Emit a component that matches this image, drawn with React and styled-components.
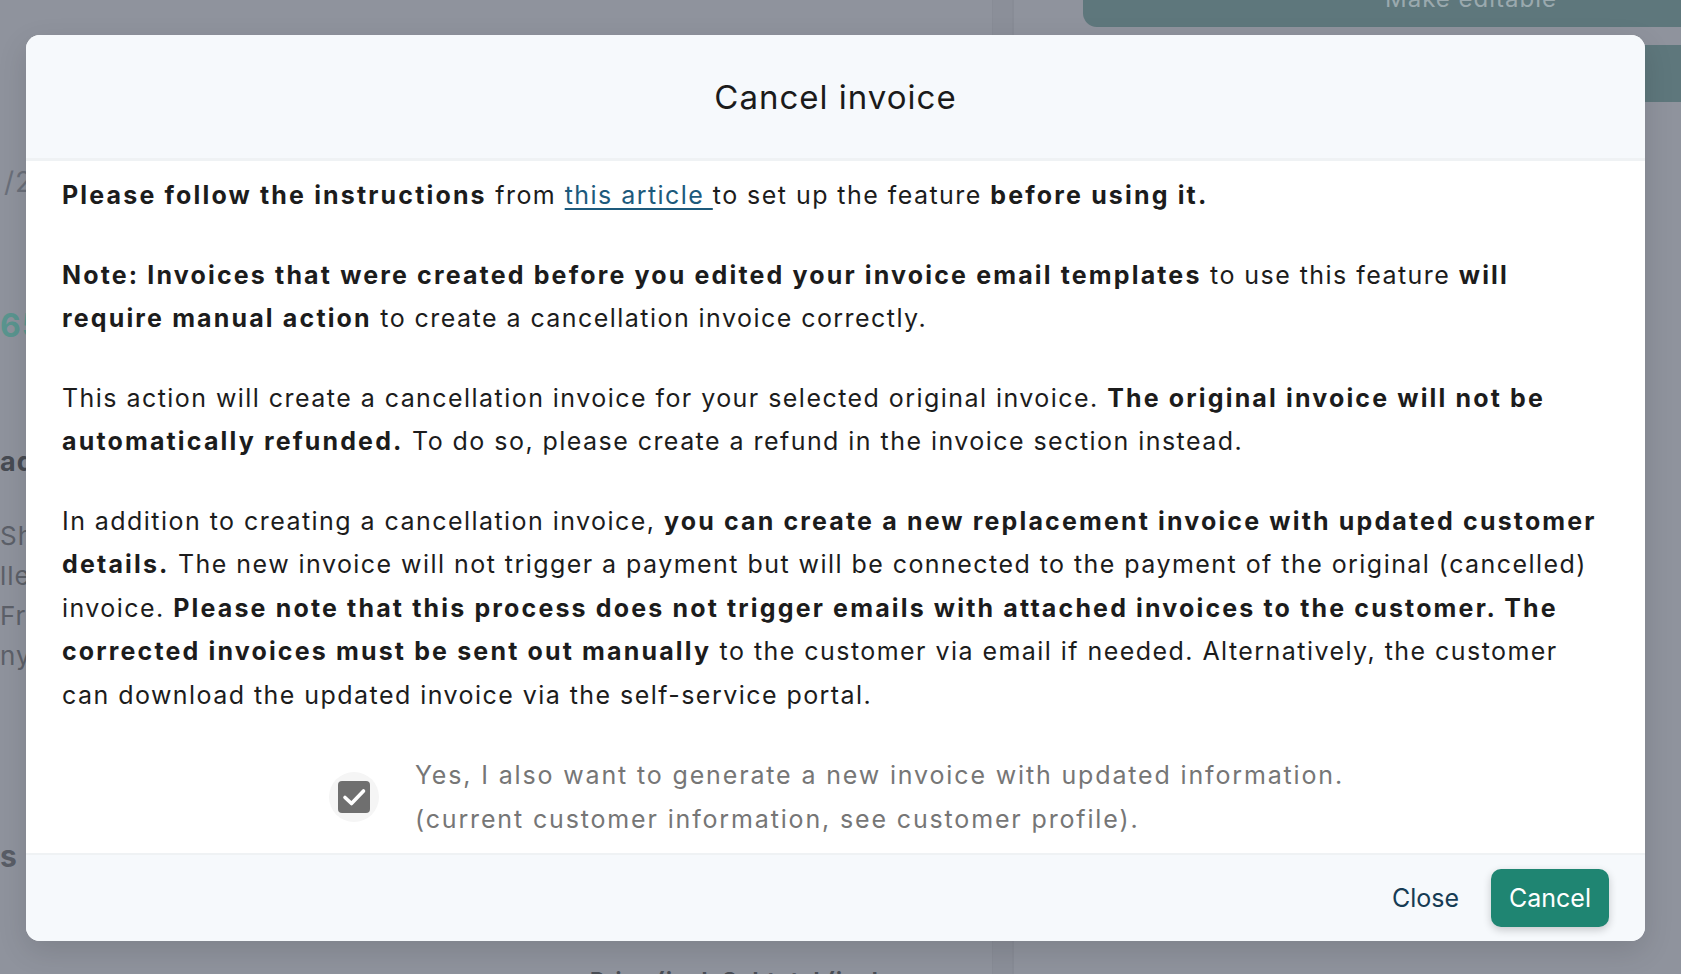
import React from 'react';
import styled, { createGlobalStyle } from 'styled-components';

const Global = createGlobalStyle`
  html, body { margin: 0; padding: 0; }
  body { font-family: Inter, "Noto Sans", sans-serif; -webkit-font-smoothing: antialiased; }
  #root { width: 1681px; height: 974px; }
`;

const Page = styled.div`
  position: relative;
  width: 1681px;
  height: 974px;
  overflow: hidden;
  background: #8f939d;
  display: grid;
  grid-template-columns: 992px 21px 42px 1fr;
`;

const LeftCol = styled.div`
  display: flex;
  flex-direction: column;
  overflow: hidden;
`;

const Frag = styled.div`
  margin-top: ${p => p.$top || 0}px;
  margin-left: ${p => p.$left || 0}px;
  font-size: ${p => p.$size || 26}px;
  line-height: ${p => p.$lh || 40}px;
  font-weight: ${p => p.$weight || 400};
  color: ${p => p.$color || '#5c6069'};
  letter-spacing: 1px;
  white-space: nowrap;
`;

const Rule = styled.div`
  margin-top: ${p => p.$top || 0}px;
  height: 1px;
  background: #9a9ea8;
  width: 100%;
`;

const SepCol = styled.div`
  background: ${p => p.$bg || 'transparent'};
  border-left: 1px solid #888c96;
  border-right: ${p => (p.$right ? '1px solid #888c96' : 'none')};
`;

const RightCol = styled.div`
  display: flex;
  flex-direction: column;
  padding-left: 28px;
`;

const MakeEditable = styled.div`
  margin-top: -30px;
  height: 57px;
  background: #5e777c;
  border-radius: 0 0 0 14px;
  display: flex;
  align-items: center;
  justify-content: center;
  padding-left: 178px;
  color: #9aa9ae;
  font-size: 24px;
  letter-spacing: 1px;
`;

const TealBar = styled.div`
  margin-top: 18px;
  margin-left: -28px;
  height: 57px;
  background: #5e777c;
`;

const Dialog = styled.div`
  position: absolute;
  top: 35px;
  left: 26px;
  width: 1619px;
  height: 906px;
  background: #ffffff;
  border-radius: 14px;
  overflow: hidden;
  display: flex;
  flex-direction: column;
  box-shadow: 0 10px 30px rgba(0, 0, 0, 0.12);
`;

const Header = styled.header`
  flex-shrink: 0;
  height: 123px;
  background: #f6f9fc;
  border-bottom: 3px solid #eff2f4;
  display: flex;
  align-items: center;
  justify-content: center;
`;

const Title = styled.h2`
  margin: 0;
  font-size: 33px;
  font-weight: 400;
  letter-spacing: 1px;
  color: #1b1b1b;
`;

const Body = styled.div`
  flex: 1;
  padding: 13px 34px 0 36px;
  color: #1c1c1c;
`;

const Para = styled.p`
  margin: 0 0 36px;
  font-size: 25px;
  line-height: 43.5px;
  letter-spacing: 1.45px;
  b { font-weight: 700; letter-spacing: 2.15px; }
`;

const Link = styled.a`
  color: #1d5a7c;
  text-decoration: underline;
  text-underline-offset: 4px;
  text-decoration-thickness: 1.5px;
`;

const CheckRow = styled.label`
  display: flex;
  align-items: center;
  justify-content: center;
  gap: 36px;
`;

const Halo = styled.span`
  width: 50px;
  height: 50px;
  border-radius: 50%;
  background: #f5f5f5;
  display: flex;
  align-items: center;
  justify-content: center;
  flex-shrink: 0;
`;

const Box = styled.span`
  width: 32px;
  height: 32px;
  border-radius: 4px;
  background: #6f6f6f;
  display: flex;
  align-items: center;
  justify-content: center;
`;

const CheckLabel = styled.span`
  font-size: 25px;
  line-height: 44px;
  letter-spacing: 1.85px;
  color: #767676;
`;

const Footer = styled.footer`
  flex-shrink: 0;
  height: 86px;
  background: #f6f9fc;
  border-top: 2px solid #eff2f4;
  display: flex;
  align-items: center;
  justify-content: flex-end;
  gap: 16px;
  padding: 0 36px 0 0;
`;

const TextButton = styled.button`
  border: none;
  background: none;
  font-family: inherit;
  font-size: 25px;
  color: #163c54;
  padding: 12px 16px;
  cursor: pointer;
`;

const PrimaryButton = styled.button`
  border: none;
  font-family: inherit;
  font-size: 25px;
  color: #ffffff;
  background: #1f8572;
  height: 58px;
  padding: 0 18px;
  border-radius: 10px;
  box-shadow: 0 3px 8px rgba(0, 0, 0, 0.2);
  cursor: pointer;
`;

export default function App() {
  return (
    <>
      <Global />
      <Page>
        <LeftCol>
          <Frag $top={162} $left={4} $size={28} $color="#6a6f7a">/2</Frag>
          <Frag $top={104} $size={32} $weight={700} $color="#5a958f">65</Frag>
          <Frag $top={96} $size={27} $weight={700} $color="#474b53">ad</Frag>
          <Rule $top={16} />
          <Frag $top={18}>Sh</Frag>
          <Frag>lle</Frag>
          <Frag>Fra</Frag>
          <Frag>ny</Frag>
          <Rule $top={18} />
          <Frag $top={146} $size={30} $lh={33} $weight={700} $color="#595d66">s</Frag>
          <Frag $top={91} $left={590} $size={22} $lh={33} $weight={700} $color="#4a4e56">Price (incl. Subtotal (incl.</Frag>
        </LeftCol>
        <SepCol $bg="#8b8f99" $right />
        <SepCol />
        <RightCol>
          <MakeEditable>Make editable</MakeEditable>
          <TealBar />
        </RightCol>

        <Dialog role="dialog">
          <Header>
            <Title>Cancel invoice</Title>
          </Header>
          <Body>
            <Para>
              <b>Please follow the instructions</b> from <Link href="#">this article </Link>to set up the feature <b>before using it.</b>
            </Para>
            <Para>
              <b>Note: Invoices that were created before you edited your invoice email templates</b> to use this feature <b>will require manual action</b> to create a cancellation invoice correctly.
            </Para>
            <Para>
              This action will create a cancellation invoice for your selected original invoice. <b>The original invoice will not be automatically refunded.</b> To do so, please create a refund in the invoice section instead.
            </Para>
            <Para>
              In addition to creating a cancellation invoice, <b>you can create a new replacement invoice with updated customer details.</b> The new invoice will not trigger a payment but will be connected to the payment of the original (cancelled) invoice. <b>Please note that this process does not trigger emails with attached invoices to the customer. The corrected invoices must be sent out manually</b> to the customer via email if needed. Alternatively, the customer can download the updated invoice via the self-service portal.
            </Para>
            <CheckRow>
              <Halo>
                <Box>
                  <svg width="32" height="32" viewBox="0 0 32 32" fill="none">
                    <path d="M7 16.5l6.5 6L25.5 10" stroke="#fff" strokeWidth="3.6" strokeLinecap="round" strokeLinejoin="round" />
                  </svg>
                </Box>
              </Halo>
              <CheckLabel>
                Yes, I also want to generate a new invoice with updated information.
                <br />
                (current customer information, see customer profile).
              </CheckLabel>
            </CheckRow>
          </Body>
          <Footer>
            <TextButton>Close</TextButton>
            <PrimaryButton>Cancel</PrimaryButton>
          </Footer>
        </Dialog>
      </Page>
    </>
  );
}
